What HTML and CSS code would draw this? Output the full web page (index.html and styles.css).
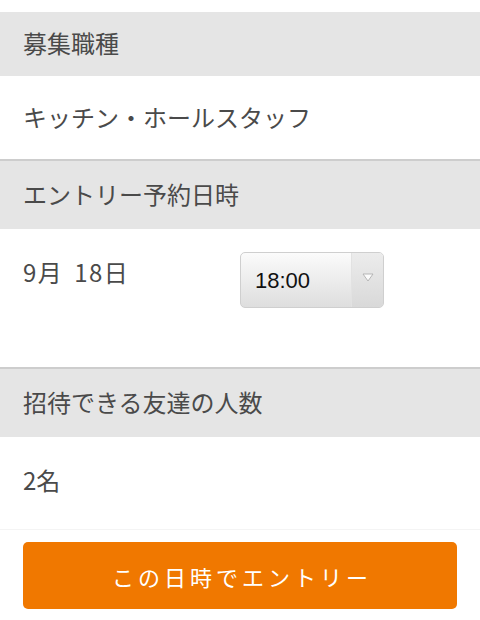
FILE: index.html
```html
<!DOCTYPE html>
<html lang="ja">
<head>
    <meta charset="UTF-8">
    <meta name="viewport" content="width=device-width, initial-scale=1.0">
    <title>エントリー予約</title>
    <link rel="stylesheet" href="styles.css">
</head>
<body>

    <div class="entry">
        <div class="section-title first">募集職種</div>
        <div class="section-body job">キッチン・ホールスタッフ</div>

        <div class="section-title">エントリー予約日時</div>
        <div class="section-body schedule">
            <span class="date">9月 18日</span>
            <div class="time-select">
                <span class="time-value">18:00</span>
                <span class="time-arrow">
                    <svg width="12" height="9" viewBox="0 0 12 9">
                        <polygon points="1,1 11,1 6,8" fill="#fbfbfb" stroke="#a8a8a8" stroke-width="0.8"/>
                    </svg>
                </span>
            </div>
        </div>

        <div class="section-title">招待できる友達の人数</div>
        <div class="section-body friends">2名</div>

        <div class="actions">
            <button class="entry-button">この日時でエントリー</button>
        </div>
    </div>

</body>
</html>
```

FILE: styles.css
```css
body {
    font-family: "Noto Sans CJK JP", "Noto Sans", sans-serif;
    background-color: #fff;
    color: #4a4a4a;
    margin: 0;
    padding: 0;
}
.entry {
    padding-top: 12px;
}
.section-title {
    display: flex;
    align-items: center;
    box-sizing: border-box;
    height: 70px;
    padding: 0 0 3px 23px;
    font-size: 24px;
    background: #e5e5e5;
    border-top: 2px solid #cdcdcd;
}
.section-title.first {
    height: 64px;
    border-top: none;
}
.section-body {
    padding-left: 23px;
    font-size: 24px;
}
.job {
    display: flex;
    align-items: center;
    box-sizing: border-box;
    height: 83px;
    padding-bottom: 3px;
}
.schedule {
    display: flex;
    align-items: flex-start;
    height: 115px;
    padding-top: 23px;
}
.date {
    width: 217px;
    line-height: 36px;
    margin-top: 2px;
    letter-spacing: 1.5px;
    word-spacing: 4px;
}
.time-select {
    display: flex;
    width: 142px;
    height: 54px;
    border: 1px solid #cfcfcf;
    border-radius: 5px;
    background: linear-gradient(#fbfbfb, #dedede);
    overflow: hidden;
}
.time-value {
    flex: 1;
    display: flex;
    align-items: center;
    padding-left: 14px;
    padding-top: 2px;
    font-family: "Liberation Sans", Arial, sans-serif;
    font-size: 22px;
    color: #111;
}
.time-arrow {
    width: 31px;
    display: flex;
    justify-content: center;
    padding-top: 20px;
    background: linear-gradient(#ececec, #d9d9d9);
    border-left: 1px solid #e2e2e2;
}
.friends {
    display: flex;
    align-items: center;
    box-sizing: border-box;
    height: 93px;
    padding-bottom: 8px;
    border-bottom: 1px solid #f4f4f4;
}
.actions {
    padding: 12px 23px 0;
}
.entry-button {
    width: 100%;
    height: 67px;
    font-family: "Noto Sans CJK JP", sans-serif;
    font-size: 22px;
    letter-spacing: 4px;
    text-indent: 4px;
    color: #fff;
    background: #f07800;
    border: none;
    border-radius: 5px;
    cursor: pointer;
}
```
